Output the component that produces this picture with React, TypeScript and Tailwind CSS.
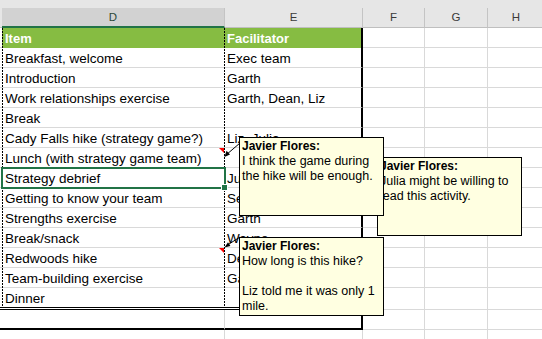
import React from "react";

type Row = { d: string; e: string };

const rows: Row[] = [
  { d: "Breakfast, welcome", e: "Exec team" },
  { d: "Introduction", e: "Garth" },
  { d: "Work relationships exercise", e: "Garth, Dean, Liz" },
  { d: "Break", e: "" },
  { d: "Cady Falls hike (strategy game?)", e: "Liz, Julia" },
  { d: "Lunch (with strategy game team)", e: "" },
  { d: "Strategy debrief", e: "Julia" },
  { d: "Getting to know your team", e: "Seth" },
  { d: "Strengths exercise", e: "Garth" },
  { d: "Break/snack", e: "Wayne" },
  { d: "Redwoods hike", e: "Dean" },
  { d: "Team-building exercise", e: "Garth" },
];

const GRID = "border-[#d9d9d9]";

function RightCols({ h }: { h: string }) {
  return (
    <>
      <div className={`${h} w-[62px] shrink-0 border-b border-r ${GRID}`} />
      <div className={`${h} w-[63px] shrink-0 border-b border-r ${GRID}`} />
      <div className={`${h} w-[56px] shrink-0 border-b ${GRID}`} />
    </>
  );
}

function Comment({
  pos,
  lines,
}: {
  pos: string;
  lines: string[];
}) {
  return (
    <div
      className={`absolute ${pos} w-[145px] h-[79px] border border-black bg-[#ffffe1] pl-[2px] pt-[1px] text-[12.5px] leading-[15px] text-black overflow-hidden`}
    >
      <div className="font-bold text-[12px] whitespace-nowrap">Javier Flores:</div>
      {lines.map((l, i) => (
        <div key={i} className="whitespace-nowrap h-[15px]">
          {l}
        </div>
      ))}
    </div>
  );
}

export default function App() {
  return (
    <div className="relative w-[542px] h-[339px] overflow-hidden bg-white font-['Liberation_Sans',Arial,sans-serif]">
      {/* column headers */}
      <div className="h-[8px] bg-[#e6e6e6]" />
      <div className="flex h-[20px] bg-[#e6e6e6] text-[11.5px] leading-[18px] text-[#3a3a3a]">
        <div className="w-[2px] shrink-0 border-b border-b-[#bfbfbf]" />
        <div className="w-[223px] shrink-0 bg-[#d2d2d2] border-b-2 border-b-[#217346] border-r border-r-[#c4c4c4] text-center text-[#2b4a39]">
          D
        </div>
        <div className="w-[138px] shrink-0 border-b border-b-[#bfbfbf] border-r border-r-[#c4c4c4] text-center">
          E
        </div>
        <div className="w-[62px] shrink-0 border-b border-b-[#bfbfbf] border-r border-r-[#c4c4c4] text-center">
          F
        </div>
        <div className="w-[63px] shrink-0 border-b border-b-[#bfbfbf] border-r border-r-[#c4c4c4] text-center">
          G
        </div>
        <div className="w-[56px] shrink-0 border-b border-b-[#bfbfbf] text-center">H</div>
      </div>

      {/* sheet body */}
      <div className="text-[13.5px] leading-[21px] text-black">
        {/* table header row */}
        <div className="flex h-[20px]">
          <div className={`w-[2px] shrink-0 border-b ${GRID}`} />
          <div className="w-[223px] shrink-0 bg-[#86bc42] pl-[3px] font-bold text-[13px] text-white whitespace-nowrap">
            Item
          </div>
          <div className="w-[138px] shrink-0 bg-[#86bc42] border-r-2 border-r-black pl-[2px] font-bold text-[13px] text-white whitespace-nowrap">
            Facilitator
          </div>
          <RightCols h="h-[20px]" />
        </div>

        {rows.map((r, i) => (
          <div key={i} className="flex h-[20px]">
            <div className={`w-[2px] shrink-0 border-b ${GRID}`} />
            <div className={`w-[223px] shrink-0 border-b ${GRID} pl-[3px] whitespace-nowrap`}>{r.d}</div>
            <div className={`w-[138px] shrink-0 border-b ${GRID} border-r-2 border-r-black pl-[2px] whitespace-nowrap`}>
              {r.e}
            </div>
            <RightCols h="h-[20px]" />
          </div>
        ))}

        {/* last agenda item, closed with a double rule */}
        <div className="flex h-[22px]">
          <div className="w-[2px] shrink-0 border-b-[3px] border-double border-black" />
          <div className="w-[223px] shrink-0 border-b-[3px] border-double border-black pl-[3px] whitespace-nowrap">
            Dinner
          </div>
          <div className="w-[138px] shrink-0 border-b-[3px] border-double border-b-black border-r-2 border-r-black" />
          <RightCols h="h-[22px]" />
        </div>

        {/* spacer row with the heavy outline bottom */}
        <div className="flex h-[20px]">
          <div className="w-[2px] shrink-0 border-b-2 border-black" />
          <div className="w-[223px] shrink-0 border-b-2 border-b-black border-r border-r-[#d9d9d9]" />
          <div className="w-[138px] shrink-0 border-b-2 border-b-black border-r-2 border-r-black" />
          <RightCols h="h-[20px]" />
        </div>

        <div className="flex h-[20px]">
          <div className="w-[2px] shrink-0" />
          <div className={`w-[223px] shrink-0 border-r ${GRID}`} />
          <div className={`w-[138px] shrink-0 border-r ${GRID}`} />
          <RightCols h="h-[20px]" />
        </div>
      </div>

      {/* copy marquee around column D */}
      <svg className="absolute left-0 top-0 pointer-events-none" width={542} height={339}>
        <line x1={2.5} y1={28} x2={2.5} y2={307} stroke="#000" strokeWidth={1} strokeDasharray="2 1" />
        <line x1={224.5} y1={28} x2={224.5} y2={307} stroke="#000" strokeWidth={1} strokeDasharray="2 1" />
      </svg>

      {/* active cell */}
      <div className="absolute left-[1px] top-[167px] w-[225px] h-[22px] border-2 border-[#217346]" />
      <div className="absolute left-[222px] top-[185px] w-[5px] h-[5px] bg-[#217346] outline outline-1 outline-white" />

      {/* comment indicators and callout leaders */}
      <svg className="absolute left-0 top-0 pointer-events-none" width={542} height={339}>
        <polygon points="219,148 224,148 224,153" fill="#ff0000" />
        <polygon points="219,248 224,248 224,253" fill="#ff0000" />
        <line x1={226} y1={155} x2={240} y2={143} stroke="#000" strokeWidth={1} />
        <polygon points="224.5,157 230,154.5 226.5,150.8" fill="#000" />
        <line x1={226} y1={246} x2={240} y2={237} stroke="#000" strokeWidth={1} />
        <polygon points="224.5,247.5 230.4,246 228,242.2" fill="#000" />
      </svg>

      {/* comment notes */}
      <Comment pos="left-[377px] top-[157px]" lines={["Julia might be willing to", "lead this activity."]} />
      <Comment pos="left-[239px] top-[137px]" lines={["I think the game during", "the hike will be enough."]} />
      <Comment
        pos="left-[239px] top-[237px]"
        lines={["How long is this hike?", "", "Liz told me it was only 1", "mile."]}
      />
    </div>
  );
}
